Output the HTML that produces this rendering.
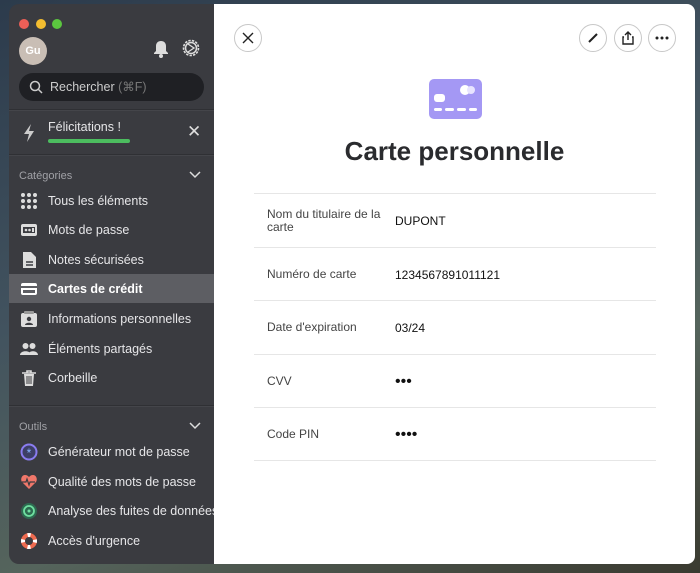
<!DOCTYPE html>
<html><head><meta charset="utf-8"><style>
*{margin:0;padding:0;box-sizing:border-box}
body{width:700px;height:573px;overflow:hidden;font-family:"Liberation Sans",sans-serif;background:linear-gradient(160deg,#2c3b4c 0%,#42535f 40%,#55645c 70%,#3a3a30 100%);position:relative}
.side{position:absolute;left:9px;top:4px;width:206px;height:560px;background:#3a3b40;border-radius:10px 0 0 10px;color:#e6e6e8;font-size:12.5px}
.main{position:absolute;left:214px;top:4px;width:481px;height:560px;background:#fff;border-radius:0 8px 8px 0}
.dot{position:absolute;top:15px;width:10px;height:10px;border-radius:50%}
.abs{position:absolute}
.item{position:absolute;left:0;width:206px;height:29px;line-height:31px;padding-left:39px}
.item svg{position:absolute;left:11px;top:6px}
.sel{background:#5d5e63}
.hr{position:absolute;left:0;width:206px;height:2px;background:#2f3034;border-bottom:1px solid #44454a}
.lbl{position:absolute;left:10px;font-size:11px;color:#a0a1a6}
.btn{position:absolute;top:20px;width:28px;height:28px;border:1px solid #c8c8c8;border-radius:50%;display:flex;align-items:center;justify-content:center}
.row{position:absolute;left:40px;width:402px;border-top:1px solid #e6e6e6;height:54px;font-size:12px;color:#333}
.row .k{position:absolute;left:13px;top:0;height:53px;display:flex;align-items:center;width:120px;line-height:13px;color:#444}
.row .v{position:absolute;left:141px;top:0;height:53px;display:flex;align-items:center;color:#111}
</style></head><body>
<div class="side">
<div class="dot" style="left:10px;background:#ec5f57"></div>
<div class="dot" style="left:27px;background:#f3bd30"></div>
<div class="dot" style="left:43px;background:#5bc63f"></div>
<div class="abs" style="left:10px;top:33px;width:28px;height:28px;border-radius:50%;background:#c9beb5;color:#fff;font-weight:bold;font-size:11px;text-align:center;line-height:28px">Gu</div>
<svg class="abs" style="left:143px;top:35px" width="18" height="20" viewBox="0 0 18 20"><path d="M9 2c-3 0-5 2-5 5v5l-2 2v1h14v-1l-2-2V7c0-3-2-5-5-5z" fill="#ddd"/><circle cx="9" cy="17" r="2" fill="#ddd"/></svg>
<svg class="abs" style="left:172px;top:34px" width="20" height="20" viewBox="0 0 20 20"><circle cx="10" cy="10" r="7.5" fill="none" stroke="#ddd" stroke-width="1.6" stroke-dasharray="2.4 1.2"/><circle cx="10" cy="10" r="5.5" fill="none" stroke="#ddd" stroke-width="1.5"/><path d="M7 6l6 4-6 4" fill="none" stroke="#ddd" stroke-width="1.3"/></svg>
<div class="abs" style="left:10px;top:69px;width:185px;height:28px;border-radius:14px;background:#1f2024;color:#ccc;font-size:12.5px;line-height:28px;padding-left:31px">Rechercher <span style="color:#777">(⌘F)</span>
<svg class="abs" style="left:10px;top:7px" width="14" height="14" viewBox="0 0 14 14"><circle cx="6" cy="6" r="4.5" fill="none" stroke="#ccc" stroke-width="1.5"/><path d="M9.5 9.5l3.5 3.5" stroke="#ccc" stroke-width="1.5"/></svg></div>
<div class="hr" style="top:105px"></div>
<svg class="abs" style="left:13px;top:119px" width="14" height="20" viewBox="0 0 14 20"><path d="M9 1L2 11h5l-2 8 7-11H7z" fill="#ccc"/></svg>
<div class="abs" style="left:39px;top:116px;font-size:12.5px">Félicitations !</div>
<div class="abs" style="left:39px;top:135px;width:82px;height:4px;border-radius:2px;background:#4cbd5f"></div>
<div class="abs" style="left:178px;top:118px;font-size:17px;color:#ddd">✕</div>
<div class="hr" style="top:150px"></div>
<div class="lbl" style="top:166px">Catégories</div>
<svg class="abs" style="left:180px;top:167px" width="12" height="8"><path d="M1 1l5 5 5-5" fill="none" stroke="#ddd" stroke-width="1.5"/></svg>
<div class="item" style="top:182px"><svg width="18" height="18" viewBox="0 0 18 18" fill="#ddd"><circle cx="3" cy="3" r="2"/><circle cx="9" cy="3" r="2"/><circle cx="15" cy="3" r="2"/><circle cx="3" cy="9" r="2"/><circle cx="9" cy="9" r="2"/><circle cx="15" cy="9" r="2"/><circle cx="3" cy="15" r="2"/><circle cx="9" cy="15" r="2"/><circle cx="15" cy="15" r="2"/></svg>Tous les éléments</div>
<div class="item" style="top:211px"><svg width="18" height="18" viewBox="0 0 18 18"><rect x="1" y="3" width="16" height="12" rx="2" fill="#ddd"/><rect x="3" y="6" width="12" height="6" fill="#3a3b40"/><circle cx="6" cy="9" r="1.3" fill="#ddd"/><circle cx="9.5" cy="9" r="1.3" fill="#ddd"/><rect x="12" y="7" width="2" height="4" fill="#ddd"/></svg>Mots de passe</div>
<div class="item" style="top:241px"><svg width="18" height="18" viewBox="0 0 18 18"><path d="M3 1h8l5 5v11H3z" fill="#ddd"/><path d="M6 11h7M6 14h7" stroke="#3a3b40" stroke-width="1.5"/></svg>Notes sécurisées</div>
<div class="item sel" style="top:270px"><svg width="18" height="18" viewBox="0 0 18 18"><rect x="1" y="3" width="16" height="12" rx="2" fill="#fff"/><rect x="1" y="6" width="16" height="2" fill="#5d5e63"/><rect x="3" y="10" width="12" height="3" fill="#5d5e63"/></svg><b style="font-weight:600;color:#fff">Cartes de crédit</b></div>
<div class="item" style="top:300px"><svg width="18" height="18" viewBox="0 0 18 18"><rect x="1" y="3" width="16" height="14" rx="2" fill="#ddd"/><rect x="4" y="1" width="10" height="3" rx="1" fill="#999"/><circle cx="9" cy="9" r="2.2" fill="#3a3b40"/><path d="M5 15c0-3 8-3 8 0z" fill="#3a3b40"/></svg>Informations personnelles</div>
<div class="item" style="top:330px"><svg width="18" height="18" viewBox="0 0 18 18" fill="#ddd"><circle cx="5.5" cy="6" r="3"/><circle cx="12.5" cy="6" r="3"/><path d="M0 15c0-5 11-5 11 0zM8 15c0-5 10-5 10 0z"/></svg>Éléments partagés</div>
<div class="item" style="top:359px"><svg width="18" height="18" viewBox="0 0 18 18"><path d="M2 4h14M7 4V2h4v2" stroke="#ddd" stroke-width="1.6" fill="none"/><path d="M4 5h10l-1 12H5z" fill="#ddd"/><path d="M7 7v8M9 7v8M11 7v8" stroke="#3a3b40" stroke-width="1"/></svg>Corbeille</div>
<div class="hr" style="top:401px"></div>
<div class="lbl" style="top:417px">Outils</div>
<svg class="abs" style="left:180px;top:418px" width="12" height="8"><path d="M1 1l5 5 5-5" fill="none" stroke="#ddd" stroke-width="1.5"/></svg>
<div class="item" style="top:433px"><svg width="18" height="18" viewBox="0 0 18 18"><circle cx="9" cy="9" r="7.5" fill="#3d3f66" stroke="#8a7cf0" stroke-width="2"/><text x="9" y="14" font-size="12" fill="#8ab4ff" text-anchor="middle">*</text></svg>Générateur mot de passe</div>
<div class="item" style="top:463px"><svg width="18" height="18" viewBox="0 0 18 18"><path d="M9 16L2 9C0 6 2 2 5 2c2 0 3 1 4 2 1-1 2-2 4-2 3 0 5 4 3 7z" fill="#f0776a"/><path d="M2 9h4l1-3 2 6 1-3h5" stroke="#3a3b40" stroke-width="1.2" fill="none"/></svg>Qualité des mots de passe</div>
<div class="item" style="top:492px;white-space:nowrap;overflow:hidden"><svg width="18" height="18" viewBox="0 0 18 18"><circle cx="9" cy="9" r="8" fill="#2d6a50"/><circle cx="9" cy="9" r="5" fill="none" stroke="#6fe0a0" stroke-width="1.8"/><circle cx="9" cy="9" r="1.5" fill="#6fe0a0"/></svg>Analyse des fuites de données</div>
<div class="item" style="top:522px"><svg width="18" height="18" viewBox="0 0 18 18"><circle cx="9" cy="9" r="6" fill="none" stroke="#ee6a4f" stroke-width="4"/><circle cx="9" cy="9" r="6" fill="none" stroke="#fff" stroke-width="4" stroke-dasharray="3 6.4" stroke-dashoffset="1.5"/></svg>Accès d'urgence</div>
</div>
<div class="main">
<div class="btn" style="left:20px"><svg width="12" height="12"><path d="M1 1l10 10M11 1L1 11" stroke="#222" stroke-width="1.4"/></svg></div>
<div class="btn" style="left:365px"><svg width="12" height="12"><path d="M2 10l8-8" stroke="#222" stroke-width="2"/></svg></div>
<div class="btn" style="left:400px"><svg width="12" height="14"><path d="M6 1v8M3 4l3-3 3 3M2 6H1v7h10V6h-1" stroke="#222" stroke-width="1.4" fill="none"/></svg></div>
<div class="btn" style="left:434px"><svg width="14" height="4" fill="#222"><circle cx="2" cy="2" r="1.5"/><circle cx="7" cy="2" r="1.5"/><circle cx="12" cy="2" r="1.5"/></svg></div>
<svg class="abs" style="left:215px;top:75px" width="53" height="40" viewBox="0 0 53 40"><rect width="53" height="40" rx="5" fill="#a498f4"/><circle cx="36" cy="11" r="5" fill="#fff"/><circle cx="42" cy="11" r="4" fill="#e8e4ff"/><rect x="5" y="15" width="11" height="8" rx="3" fill="#fff"/><g fill="#fff"><rect x="5" y="29" width="8" height="3" rx="1.5"/><rect x="16" y="29" width="9" height="3" rx="1.5"/><rect x="28" y="29" width="9" height="3" rx="1.5"/><rect x="40" y="29" width="8" height="3" rx="1.5"/></g></svg>
<div class="abs" style="left:0;width:481px;top:132px;text-align:center;font-size:26px;font-weight:bold;color:#2a2b2e">Carte personnelle</div>
<div class="row" style="top:189px"><div class="k">Nom du titulaire de la carte</div><div class="v">DUPONT</div></div>
<div class="row" style="top:243px"><div class="k">Numéro de carte</div><div class="v">1234567891011121</div></div>
<div class="row" style="top:296px"><div class="k">Date d'expiration</div><div class="v">03/24</div></div>
<div class="row" style="top:350px"><div class="k">CVV</div><div class="v" style="font-size:16px">•••</div></div>
<div class="row" style="top:403px;border-bottom:1px solid #e6e6e6"><div class="k">Code PIN</div><div class="v" style="font-size:16px">••••</div></div>
</div>
</body></html>
